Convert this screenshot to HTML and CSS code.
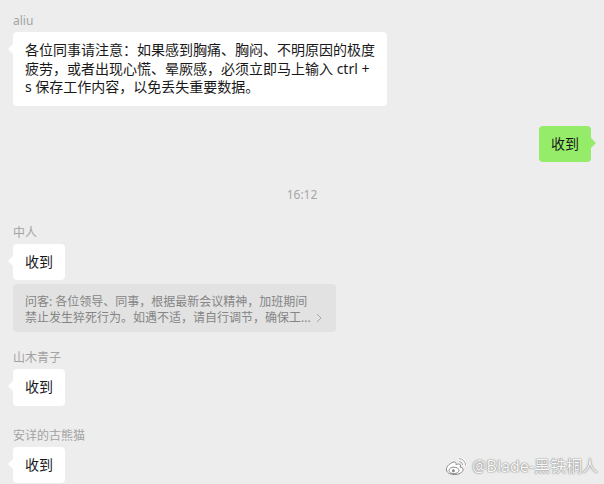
FILE: index.html
```html
<!DOCTYPE html>
<html lang="zh-CN">
<head>
<meta charset="utf-8">
<title>聊天</title>
<link rel="stylesheet" href="styles.css">
</head>
<body>
<div class="chat">
  <div class="name">aliu</div>
  <div class="bubble wide">各位同事请注意：如果感到胸痛、胸闷、不明原因的极度疲劳，或者出现心慌、晕厥感，必须立即马上输入 ctrl +<br>s 保存工作内容，以免丢失重要数据。</div>

  <div class="bubble self">收到</div>

  <div class="time">16:12</div>

  <div class="name group">中人</div>
  <div class="bubble">收到</div>
  <div class="quote">
    <div class="quote-text">
      <div class="qline">问客: 各位领导、同事，根据最新会议精神，加班期间</div>
      <div class="qline">禁止发生猝死行为。如遇不适，请自行调节，确保工...</div>
    </div>
    <svg class="chev" width="6" height="10" viewBox="0 0 6 10"><polyline points="1,1 5,5 1,9" fill="none" stroke="#a8a8a8" stroke-width="1"/></svg>
  </div>

  <div class="name group g2">山木青子</div>
  <div class="bubble">收到</div>

  <div class="name group g3">安详的古熊猫</div>
  <div class="bubble">收到</div>
</div>

<div class="watermark">
  <svg class="weibo" width="24" height="20" viewBox="0 0 24 20">
    <path d="M9 6.2 C5 8 2 11 2.5 14 C3 17.5 8 19 12 18.5 C16.5 18 19.5 15.5 19 13 C18.7 11.5 17.2 11 16.2 11.3 C16.8 9.5 16.5 7.8 14.5 8 C13.2 8.2 12.1 8.8 12.1 8.8 C12.5 6.6 11 5.2 9 6.2Z" fill="#fff" stroke="#8a8a8a" stroke-width="1"/>
    <ellipse cx="10" cy="14.4" rx="5" ry="3.2" fill="none" stroke="#8a8a8a" stroke-width="1"/>
    <circle cx="9.4" cy="14.8" r="1.5" fill="#8a8a8a"/>
    <path d="M15.2 2.6 A6.2 6.2 0 0 1 21.6 9.2" stroke="#fff" stroke-width="2.4" fill="none" stroke-linecap="round"/>
    <path d="M15.2 2.6 A6.2 6.2 0 0 1 21.6 9.2" stroke="#8a8a8a" stroke-width="0.8" fill="none" stroke-linecap="round"/>
    <path d="M15.6 5.6 A3 3 0 0 1 18.6 8.6" stroke="#fff" stroke-width="2.2" fill="none" stroke-linecap="round"/>
    <path d="M15.6 5.6 A3 3 0 0 1 18.6 8.6" stroke="#8a8a8a" stroke-width="0.8" fill="none" stroke-linecap="round"/>
  </svg>
  <span class="wm-text">@Blade-黑铁桐人</span>
</div>
</body>
</html>
```

FILE: styles.css
```css
html, body {
  margin: 0;
  padding: 0;
}
body {
  width: 604px;
  height: 484px;
  overflow: hidden;
  position: relative;
  background: #ededed;
  font-family: "Noto Sans", "Noto Sans CJK SC", sans-serif;
}
.chat {
  display: flex;
  flex-direction: column;
  padding: 13px 13px 0;
}
.name {
  font-size: 12px;
  line-height: 16px;
  color: #a3a3a3;
}
.group {
  margin-top: 22px;
}
.g2 {
  margin-top: 18px;
}
.g3 {
  margin-top: 22px;
}
.bubble {
  position: relative;
  align-self: flex-start;
  margin-top: 3px;
  padding: 9px 12px;
  background: #ffffff;
  border-radius: 4px;
  font-size: 14px;
  line-height: 18.5px;
  color: #191919;
}
.bubble::before {
  content: "";
  position: absolute;
  top: 12px;
  left: -5px;
  border-style: solid;
  border-width: 5px 5px 5px 0;
  border-color: transparent #ffffff transparent transparent;
}
.wide {
  width: 350px;
}
.self {
  align-self: flex-end;
  margin-top: 20px;
  background: #95ec69;
}
.self::before {
  left: auto;
  right: -5px;
  border-width: 5px 0 5px 5px;
  border-color: transparent transparent transparent #95ec69;
}
.time {
  margin-top: 24.5px;
  text-align: center;
  font-size: 12px;
  line-height: 16px;
  color: #a6a6a6;
}
.quote {
  align-self: flex-start;
  box-sizing: border-box;
  width: 323px;
  margin-top: 4px;
  padding: 10px 14px 6px 12px;
  background: #e2e2e2;
  border-radius: 4px;
  display: flex;
  align-items: flex-end;
  justify-content: space-between;
  font-size: 12px;
  line-height: 16px;
  color: #858585;
}
.qline {
  white-space: nowrap;
}
.chev {
  margin-bottom: 3px;
}
.watermark {
  position: absolute;
  right: 6px;
  bottom: 8px;
  display: flex;
  align-items: center;
  gap: 4px;
}
.wm-text {
  font-size: 16px;
  line-height: 20px;
  color: #f7f7f7;
  text-shadow: 0 0 1px #6f6f6f, 0 0 2px rgba(0, 0, 0, 0.35);
}
```
